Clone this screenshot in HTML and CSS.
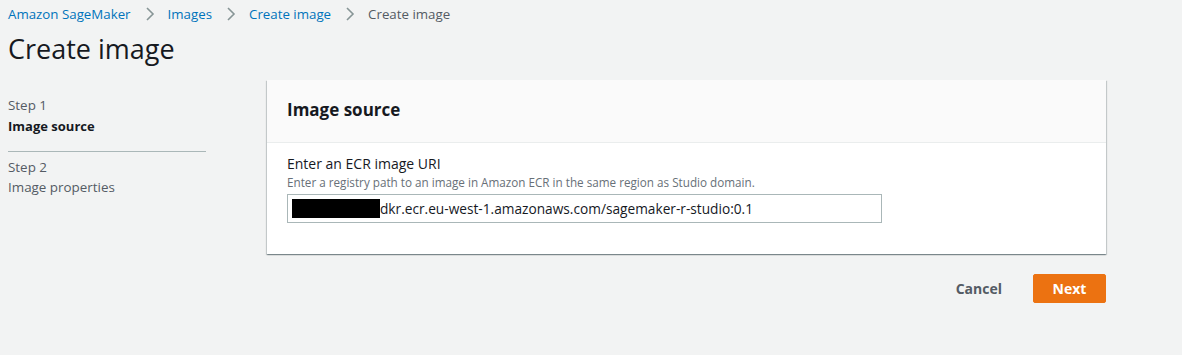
FILE: index.html
```html
<!DOCTYPE html>
<html lang="en">
<head>
  <meta charset="UTF-8" />
  <title>Create image - Amazon SageMaker</title>
  <link rel="stylesheet" href="styles.css">
</head>
<body>

<nav class="breadcrumbs">
  <a href="#">Amazon SageMaker</a>
  <span class="sep"><svg width="10" height="14" viewBox="0 0 10 14"><path d="M2 1l6 6-6 6" fill="none" stroke="#879596" stroke-width="1.6"/></svg></span>
  <a href="#">Images</a>
  <span class="sep"><svg width="10" height="14" viewBox="0 0 10 14"><path d="M2 1l6 6-6 6" fill="none" stroke="#879596" stroke-width="1.6"/></svg></span>
  <a href="#">Create image</a>
  <span class="sep"><svg width="10" height="14" viewBox="0 0 10 14"><path d="M2 1l6 6-6 6" fill="none" stroke="#879596" stroke-width="1.6"/></svg></span>
  <span class="current">Create image</span>
</nav>

<h1 class="page-title">Create image</h1>

<div class="wizard">
  <ul class="steps">
    <li class="step active">
      <span class="step-num">Step 1</span>
      <span class="step-name">Image source</span>
    </li>
    <li class="step">
      <span class="step-num">Step 2</span>
      <span class="step-name">Image properties</span>
    </li>
  </ul>

  <div class="main">
    <div class="card">
      <div class="card-header">
        <h2>Image source</h2>
      </div>
      <div class="card-body">
        <label class="field-label">Enter an ECR image URI</label>
        <p class="field-desc">Enter a registry path to an image in Amazon ECR in the same region as Studio domain.</p>
        <div class="input">
          <span class="redacted"></span><span class="input-text">dkr.ecr.eu-west-1.amazonaws.com/sagemaker-r-studio:0.1</span>
        </div>
      </div>
    </div>

    <div class="actions">
      <button class="btn-link">Cancel</button>
      <button class="btn-primary">Next</button>
    </div>
  </div>
</div>

</body>
</html>
```

FILE: styles.css
```css
* {
  box-sizing: border-box;
  font-family: "Open Sans", "Noto Sans", sans-serif;
}
body {
  margin: 0;
  background: #f2f3f3;
  color: #16191f;
  height: 355px;
}
.breadcrumbs {
  display: flex;
  align-items: center;
  padding: 3px 8px 0;
  height: 24px;
  font-size: 13.3px;
}
.breadcrumbs a {
  color: #0073bb;
  text-decoration: none;
}
.breadcrumbs .sep {
  display: flex;
  margin: 0 13px 0 14px;
}
.breadcrumbs .current {
  color: #545b64;
}
.page-title {
  margin: 7px 0 0 8px;
  font-size: 27px;
  font-weight: 400;
  line-height: 36px;
}
.wizard {
  display: flex;
  margin-top: 13px;
}
.steps {
  list-style: none;
  margin: 0;
  padding: 0 0 0 8px;
  width: 267px;
}
.step {
  display: flex;
  flex-direction: column;
  width: 198px;
  font-size: 13.4px;
  line-height: 21px;
  color: #545b64;
}
.step.active {
  padding: 0 0 14px;
  border-bottom: 1px solid #aab7b8;
  margin-top: 15px;
}
.step.active .step-name {
  color: #16191f;
  font-weight: 700;
  font-size: 13px;
}
.step + .step {
  padding-top: 5px;
  line-height: 20px;
}
.main {
  width: 839px;
}
.card {
  background: #fff;
  box-shadow: 0 1px 1px 0 rgba(0,28,36,0.3), 1px 1px 1px 0 rgba(0,28,36,0.15), -1px 1px 1px 0 rgba(0,28,36,0.15);
}
.card-header {
  background: #fafafa;
  border-bottom: 1px solid #eaeded;
  padding: 18px 20px 20px;
  height: 63px;
}
.card-header h2 {
  margin: 0;
  font-size: 17px;
  font-weight: 700;
  line-height: 24px;
}
.card-body {
  padding: 11px 20px 31px;
}
.field-label {
  display: block;
  font-size: 14px;
  line-height: 20px;
}
.field-desc {
  margin: 0 0 4px;
  font-size: 11.7px;
  line-height: 16px;
  color: #687078;
}
.input {
  display: flex;
  align-items: center;
  width: 595px;
  height: 29px;
  border: 1px solid #aab7b8;
  padding: 0 4px;
  font-size: 13.7px;
}
.redacted {
  width: 88px;
  height: 19px;
  background: #000;
}
.actions {
  display: flex;
  justify-content: flex-end;
  align-items: center;
  gap: 20px;
  margin-top: 20px;
}
.btn-link {
  background: none;
  border: none;
  color: #545b64;
  font-weight: 700;
  font-size: 14px;
  padding: 4px 11px;
  cursor: pointer;
}
.btn-primary {
  background: #ec7211;
  border: 1px solid #ec7211;
  color: #fff;
  font-weight: 700;
  font-size: 14px;
  width: 73px;
  height: 29px;
  border-radius: 2px;
  cursor: pointer;
}
```
